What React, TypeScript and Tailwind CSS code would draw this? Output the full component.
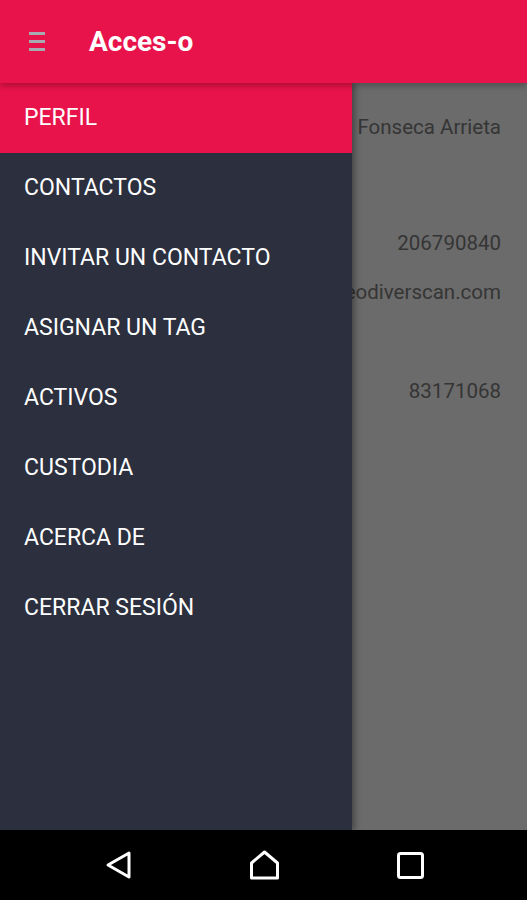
import React from "react";

const items = ["CONTACTOS", "INVITAR UN CONTACTO", "ASIGNAR UN TAG", "ACTIVOS", "CUSTODIA", "ACERCA DE", "CERRAR SESIÓN"];

export default function App() {
  return (
    <div className="w-[527px] h-[900px] flex flex-col overflow-hidden" style={{ fontFamily: "Roboto, 'Noto Sans', sans-serif" }}>
      <header className="h-[83px] bg-[#e8134a] flex items-center relative z-20 shadow-[0_3px_6px_rgba(0,0,0,0.25)]">
        <div className="ml-[29px] w-[16px] flex flex-col gap-[5px]">
          <div className="h-[3px] bg-[#a9a9b1]" />
          <div className="h-[3px] bg-[#a9a9b1]" />
          <div className="h-[3px] bg-[#a9a9b1]" />
        </div>
        <div className="ml-[44px] text-white text-[28px] font-bold leading-none">Acces-o</div>
      </header>
      <div className="relative flex-1 bg-[#6b6b6b] overflow-hidden">
        <div className="flex flex-col items-end pr-[26px] text-[#353535] text-[20.5px] leading-none">
          <div className="mt-[34px] whitespace-nowrap">Dennis  Fonseca Arrieta</div>
          <div className="mt-[95px] whitespace-nowrap">206790840</div>
          <div className="mt-[29px] whitespace-nowrap">dfonseca@geodiverscan.com</div>
          <div className="mt-[78px] whitespace-nowrap">83171068</div>
        </div>
        <nav className="absolute left-0 top-0 bottom-0 w-[352px] bg-[#2b2f3e] z-10 shadow-[3px_0_6px_rgba(0,0,0,0.35)]">
          <div className="h-[70px] bg-[#e8134a] flex items-center pl-[24px] text-white text-[23px]">PERFIL</div>
          {items.map((t) => (
            <div key={t} className="h-[70px] flex items-center pl-[24px] text-white text-[23px]">{t}</div>
          ))}
        </nav>
      </div>
      <div className="h-[70px] bg-black flex items-center justify-center gap-[117px]">
        <svg width="28" height="30" viewBox="0 0 28 30">
          <path d="M25 3 L4 15 L25 27 Z" fill="none" stroke="white" strokeWidth="3" strokeLinejoin="round" />
        </svg>
        <svg width="31" height="30" viewBox="0 0 31 30">
          <path d="M2.5 28 L2.5 13 L15.5 2 L28.5 13 L28.5 28 Z" fill="none" stroke="white" strokeWidth="3" strokeLinejoin="round" />
        </svg>
        <svg width="27" height="27" viewBox="0 0 27 27">
          <rect x="1.5" y="1.5" width="24" height="24" rx="2" fill="none" stroke="white" strokeWidth="3" />
        </svg>
      </div>
    </div>
  );
}
